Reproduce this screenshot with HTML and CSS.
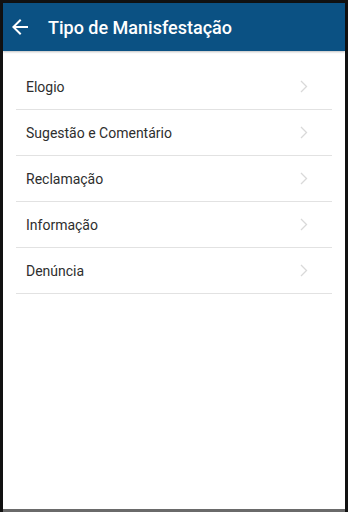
FILE: index.html
```html
<!DOCTYPE html>
<html lang="pt">
<head>
    <meta charset="UTF-8">
    <meta name="viewport" content="width=device-width, initial-scale=1.0">
    <title>Tipo de Manisfestação</title>
    <link rel="stylesheet" href="styles.css">
</head>
<body>
    <div class="screen">
        <div class="toolbar">
            <svg class="back-arrow" width="24" height="24" viewBox="0 0 24 24">
                <path d="M20 11H7.83l5.59-5.59L12 4l-8 8 8 8 1.41-1.41L7.83 13H20v-2z" fill="#fff"/>
            </svg>
            <div class="toolbar-title">Tipo de Manisfestação</div>
        </div>
        <ul class="list">
            <li class="list-item"><span>Elogio</span><svg class="chevron" width="8" height="13" viewBox="0 0 8 13"><path d="M1 1l5.5 5.5L1 12" fill="none" stroke="#d9d9d9" stroke-width="1.3"/></svg></li>
            <li class="list-item"><span>Sugestão e Comentário</span><svg class="chevron" width="8" height="13" viewBox="0 0 8 13"><path d="M1 1l5.5 5.5L1 12" fill="none" stroke="#d9d9d9" stroke-width="1.3"/></svg></li>
            <li class="list-item"><span>Reclamação</span><svg class="chevron" width="8" height="13" viewBox="0 0 8 13"><path d="M1 1l5.5 5.5L1 12" fill="none" stroke="#d9d9d9" stroke-width="1.3"/></svg></li>
            <li class="list-item"><span>Informação</span><svg class="chevron" width="8" height="13" viewBox="0 0 8 13"><path d="M1 1l5.5 5.5L1 12" fill="none" stroke="#d9d9d9" stroke-width="1.3"/></svg></li>
            <li class="list-item"><span>Denúncia</span><svg class="chevron" width="8" height="13" viewBox="0 0 8 13"><path d="M1 1l5.5 5.5L1 12" fill="none" stroke="#d9d9d9" stroke-width="1.3"/></svg></li>
        </ul>
    </div>
</body>
</html>
```

FILE: styles.css
```css
html, body {
    height: 100%;
}
body {
    margin: 0;
    font-family: Roboto, "Noto Sans", Arial, sans-serif;
    background-color: #111;
    box-sizing: border-box;
    padding: 3px 3px 0 3px;
}
.screen {
    height: 100%;
    box-sizing: border-box;
    background-color: #fff;
    border-bottom: 3px solid #6a6a6a;
    display: flex;
    flex-direction: column;
}
.toolbar {
    height: 48px;
    background-color: #0b5183;
    display: flex;
    align-items: center;
    padding-left: 5px;
    box-shadow: 0 1px 2px rgba(0, 0, 0, 0.25);
}
.back-arrow {
    margin-right: 16px;
}
.toolbar-title {
    color: #fff;
    font-size: 18px;
    font-weight: 500;
}
.list {
    list-style: none;
    margin: 0;
    padding: 13px 13px 0 13px;
}
.list-item {
    height: 45px;
    border-bottom: 1px solid #e2e2e2;
    display: flex;
    align-items: center;
    justify-content: space-between;
    padding: 0 24px 0 10px;
    font-size: 14px;
    color: #2e2e2e;
}
```
